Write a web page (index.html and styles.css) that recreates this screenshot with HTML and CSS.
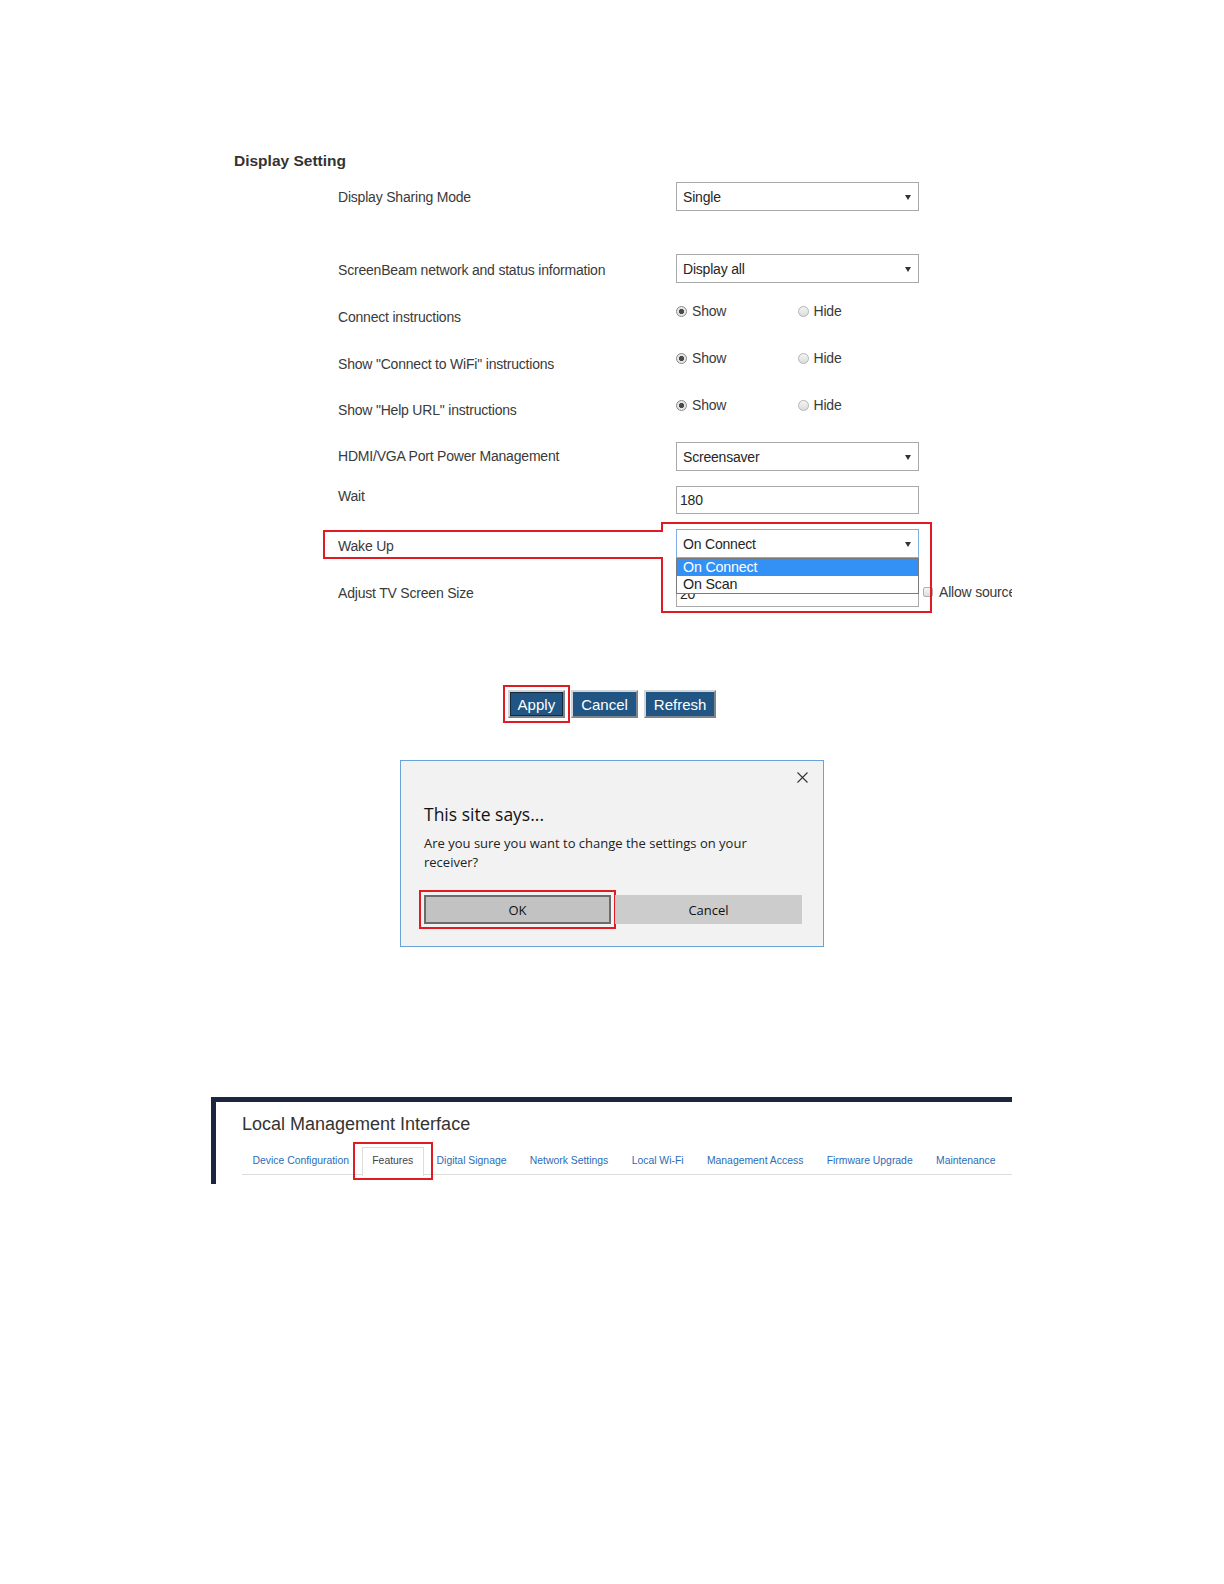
FILE: index.html
```html
<!DOCTYPE html>
<html lang="en">
<head>
<meta charset="utf-8">
<title>Display Setting</title>
<link rel="stylesheet" href="styles.css">
</head>
<body>
<section class="shot">
  <h2 class="section-title">Display Setting</h2>
  <div class="form">
    <div class="lab">Display Sharing Mode</div>
    <div class="ctl"><div class="select"><span>Single</span><b class="caret"></b></div></div>
    <div class="extra"></div>

    <div class="lab o6">ScreenBeam network and status information</div>
    <div class="ctl"><div class="select"><span>Display all</span><b class="caret"></b></div></div>
    <div class="extra"></div>

    <div class="lab o6">Connect instructions</div>
    <div class="ctl radios"><span class="opt"><i class="radio on"></i>Show</span><span class="opt"><i class="radio"></i>Hide</span></div>
    <div class="extra"></div>

    <div class="lab o6">Show "Connect to WiFi" instructions</div>
    <div class="ctl radios"><span class="opt"><i class="radio on"></i>Show</span><span class="opt"><i class="radio"></i>Hide</span></div>
    <div class="extra"></div>

    <div class="lab">Show "Help URL" instructions</div>
    <div class="ctl radios"><span class="opt"><i class="radio on"></i>Show</span><span class="opt"><i class="radio"></i>Hide</span></div>
    <div class="extra"></div>

    <div class="lab o4">HDMI/VGA Port Power Management</div>
    <div class="ctl"><div class="select"><span>Screensaver</span><b class="caret"></b></div></div>
    <div class="extra"></div>

    <div class="lab o0">Wait</div>
    <div class="ctl"><div class="input">180</div></div>
    <div class="extra"></div>

    <div class="lab o7">Wake Up</div>
    <div class="ctl">
      <div class="select focus"><span>On Connect</span><b class="caret"></b>
        <div class="dropdown">
          <div class="option sel">On Connect</div>
          <div class="option">On Scan</div>
        </div>
      </div>
    </div>
    <div class="extra"></div>

    <div class="lab o1">Adjust TV Screen Size</div>
    <div class="ctl"><div class="input short">20</div></div>
    <div class="extra"><i class="check"></i><span>Allow source</span></div>
  </div>
  <svg class="annot" width="1012" height="620" viewBox="0 0 1012 620" aria-hidden="true">
    <polygon points="324,531 662,531 662,523 931,523 931,612 662,612 662,558 324,558" fill="none" stroke="#e01b22" stroke-width="2"/>
  </svg>
</section>

<div class="actions">
  <button class="btn apply">Apply</button>
  <button class="btn">Cancel</button>
  <button class="btn">Refresh</button>
</div>

<div class="dialog">
  <div class="dlg-close"><svg width="11" height="11" viewBox="0 0 11 11"><path d="M0.5 0.5 L10.5 10.5 M10.5 0.5 L0.5 10.5" stroke="#333" stroke-width="1.1" fill="none"/></svg></div>
  <div class="dlg-title">This site says...</div>
  <div class="dlg-msg">Are you sure you want to change the settings on your<br>receiver?</div>
  <div class="dlg-btns">
    <button class="dbtn ok">OK</button>
    <button class="dbtn">Cancel</button>
  </div>
</div>

<div class="lmi">
  <div class="lmi-title">Local Management Interface</div>
  <ul class="tabs">
    <li class="tab">Device Configuration</li>
    <li class="tab active">Features</li>
    <li class="tab">Digital Signage</li>
    <li class="tab">Network Settings</li>
    <li class="tab">Local Wi-Fi</li>
    <li class="tab">Management Access</li>
    <li class="tab">Firmware Upgrade</li>
    <li class="tab">Maintenance</li>
  </ul>
</div>
</body>
</html>
```

FILE: styles.css
```css
* { box-sizing: border-box; }

html, body {
  margin: 0;
  padding: 0;
  background: #ffffff;
}

body {
  width: 1224px;
  min-height: 1584px;
  font-family: "Liberation Sans", Arial, sans-serif;
  color: #333;
}

/* ---------- top screenshot: Display Setting ---------- */
.shot {
  position: relative;
  width: 1012px;
  overflow: hidden;
  padding-top: 151px;
  padding-bottom: 8px;
  font-family: "Liberation Sans", Arial, sans-serif;
  font-size: 14px;
  letter-spacing: -0.2px;
  color: #3a3a3a;
}

.section-title {
  margin: 0 0 11px 234px;
  font-size: 15.5px;
  line-height: 20px;
  font-weight: bold;
  letter-spacing: 0;
  color: #333;
}

.form {
  margin-left: 338px;
  display: grid;
  grid-template-columns: 338px 243px 89px;
  grid-template-rows: 72px 47px 47px 47px 47px 44px 43px 53px 25px;
}

.lab {
  line-height: 20px;
  padding-top: 5px;
  white-space: nowrap;
}
.lab.o0 { padding-top: 0; }
.lab.o1 { padding-top: 1px; }
.lab.o4 { padding-top: 4px; }
.lab.o6 { padding-top: 6px; }
.lab.o7 { padding-top: 7px; }

.select {
  position: relative;
  height: 29px;
  border: 1px solid #a9a9a9;
  background: #fff;
  display: flex;
  align-items: center;
  justify-content: space-between;
  padding: 0 7px 0 6px;
  color: #262626;
  white-space: nowrap;
}
.select.focus { border-color: #7eaee2; }

.caret {
  width: 0;
  height: 0;
  margin-top: 1px;
  border-left: 3px solid transparent;
  border-right: 3px solid transparent;
  border-top: 5px solid #333;
}

.dropdown {
  position: absolute;
  left: -1px;
  right: -1px;
  top: 28px;
  border: 1px solid #7a7a7a;
  background: #fff;
  z-index: 2;
}
.option {
  height: 17px;
  line-height: 17px;
  padding-left: 6px;
  font-size: 14.3px;
  color: #222;
}
.option.sel {
  background: #3390f5;
  color: #fff;
}

.input {
  height: 28px;
  border: 1px solid #a9a9a9;
  background: #fff;
  line-height: 26px;
  padding-left: 3px;
  color: #262626;
}
.input.short { height: 25px; line-height: 23px; }

.radios {
  display: flex;
  align-items: center;
  height: 20px;
}
.opt {
  width: 123px;
  display: flex;
  align-items: center;
  gap: 5px;
  white-space: nowrap;
}
.radio {
  width: 11px;
  height: 11px;
  border-radius: 50%;
  border: 1px solid #b4b4b4;
  background: linear-gradient(#f4f4f4, #dcdcdc);
  flex: none;
}
.radio.on {
  border-color: #8a8a8a;
  background: radial-gradient(circle, #4a4a4a 0 2.4px, #e6e6e6 2.9px);
}

.extra {
  display: flex;
  align-items: center;
  gap: 6px;
  height: 20px;
  padding-left: 4px;
  white-space: nowrap;
}
.check {
  width: 10px;
  height: 10px;
  border: 1px solid #b0b0b0;
  border-radius: 2px;
  background: linear-gradient(#f5f5f5, #dedede);
  flex: none;
}

.annot {
  position: absolute;
  left: 0;
  top: 0;
  pointer-events: none;
  z-index: 3;
}

/* ---------- action buttons ---------- */
.actions {
  display: flex;
  justify-content: center;
  gap: 6px;
  margin-top: 75px;
}
.btn {
  height: 28px;
  padding: 0 8px;
  font-family: "Liberation Sans", Arial, sans-serif;
  font-size: 15px;
  color: #fff;
  background: #215584;
  border: 2px solid;
  border-color: #d2d6da #7c858e #7c858e #d2d6da;
  border-radius: 0;
}
.btn.apply {
  box-shadow: inset 0 0 0 1px #14293d;
  outline: 2px solid #e01b22;
  outline-offset: 3px;
}

/* ---------- confirm dialog ---------- */
.dialog {
  width: 424px;
  height: 187px;
  margin: 42px auto 0;
  border: 1px solid #6aa3d9;
  background: #f2f2f2;
  padding: 0 21px 0 23px;
  font-family: "Open Sans", "Noto Sans", sans-serif;
  color: #1a1a1a;
}
.dlg-close {
  display: flex;
  justify-content: flex-end;
  padding-top: 11px;
  margin-right: -6px;
  height: 22px;
}
.dlg-title {
  margin-top: 19px;
  font-size: 17.5px;
  line-height: 24px;
  color: #111;
}
.dlg-msg {
  margin-top: 8px;
  font-size: 13px;
  line-height: 19px;
  color: #222;
}
.dlg-btns {
  display: flex;
  gap: 4px;
  margin-top: 23px;
}
.dbtn {
  width: 187px;
  height: 29px;
  font-family: "Open Sans", "Noto Sans", sans-serif;
  font-size: 13px;
  color: #111;
  background: #cccccc;
  border: 2px solid #cccccc;
  border-radius: 0;
  padding: 0;
}
.dbtn.ok {
  background: #c2c2c2;
  border-color: #6b6b6b;
  outline: 2px solid #e01b22;
  outline-offset: 3px;
}

/* ---------- Local Management Interface header ---------- */
.lmi {
  margin: 150px 0 0 211px;
  width: 801px;
  height: 87px;
  border-top: 5px solid #1c2541;
  border-left: 5px solid #1c2541;
  padding: 11px 0 0 26px;
}
.lmi-title {
  font-size: 18px;
  line-height: 22px;
  color: #333;
}
.tabs {
  list-style: none;
  margin: 12px 0 0;
  padding: 0;
  display: flex;
  border-bottom: 1px solid #dddddd;
  height: 28px;
}
.tab {
  position: relative;
  height: 28px;
  line-height: 26px;
  padding: 0 9.5px;
  margin-right: 2.3px;
  border: 1px solid transparent;
  border-bottom: none;
  font-size: 10.4px;
  color: #2b6cb8;
  white-space: nowrap;
}
.tab.active {
  border-color: #dddddd;
  background: #fff;
  color: #444;
  height: 29px;
  margin-bottom: -1px;
}
.tab.active::after {
  content: "";
  position: absolute;
  left: -10px;
  right: -10px;
  top: -6px;
  bottom: -4px;
  border: 2px solid #e01b22;
}
```
